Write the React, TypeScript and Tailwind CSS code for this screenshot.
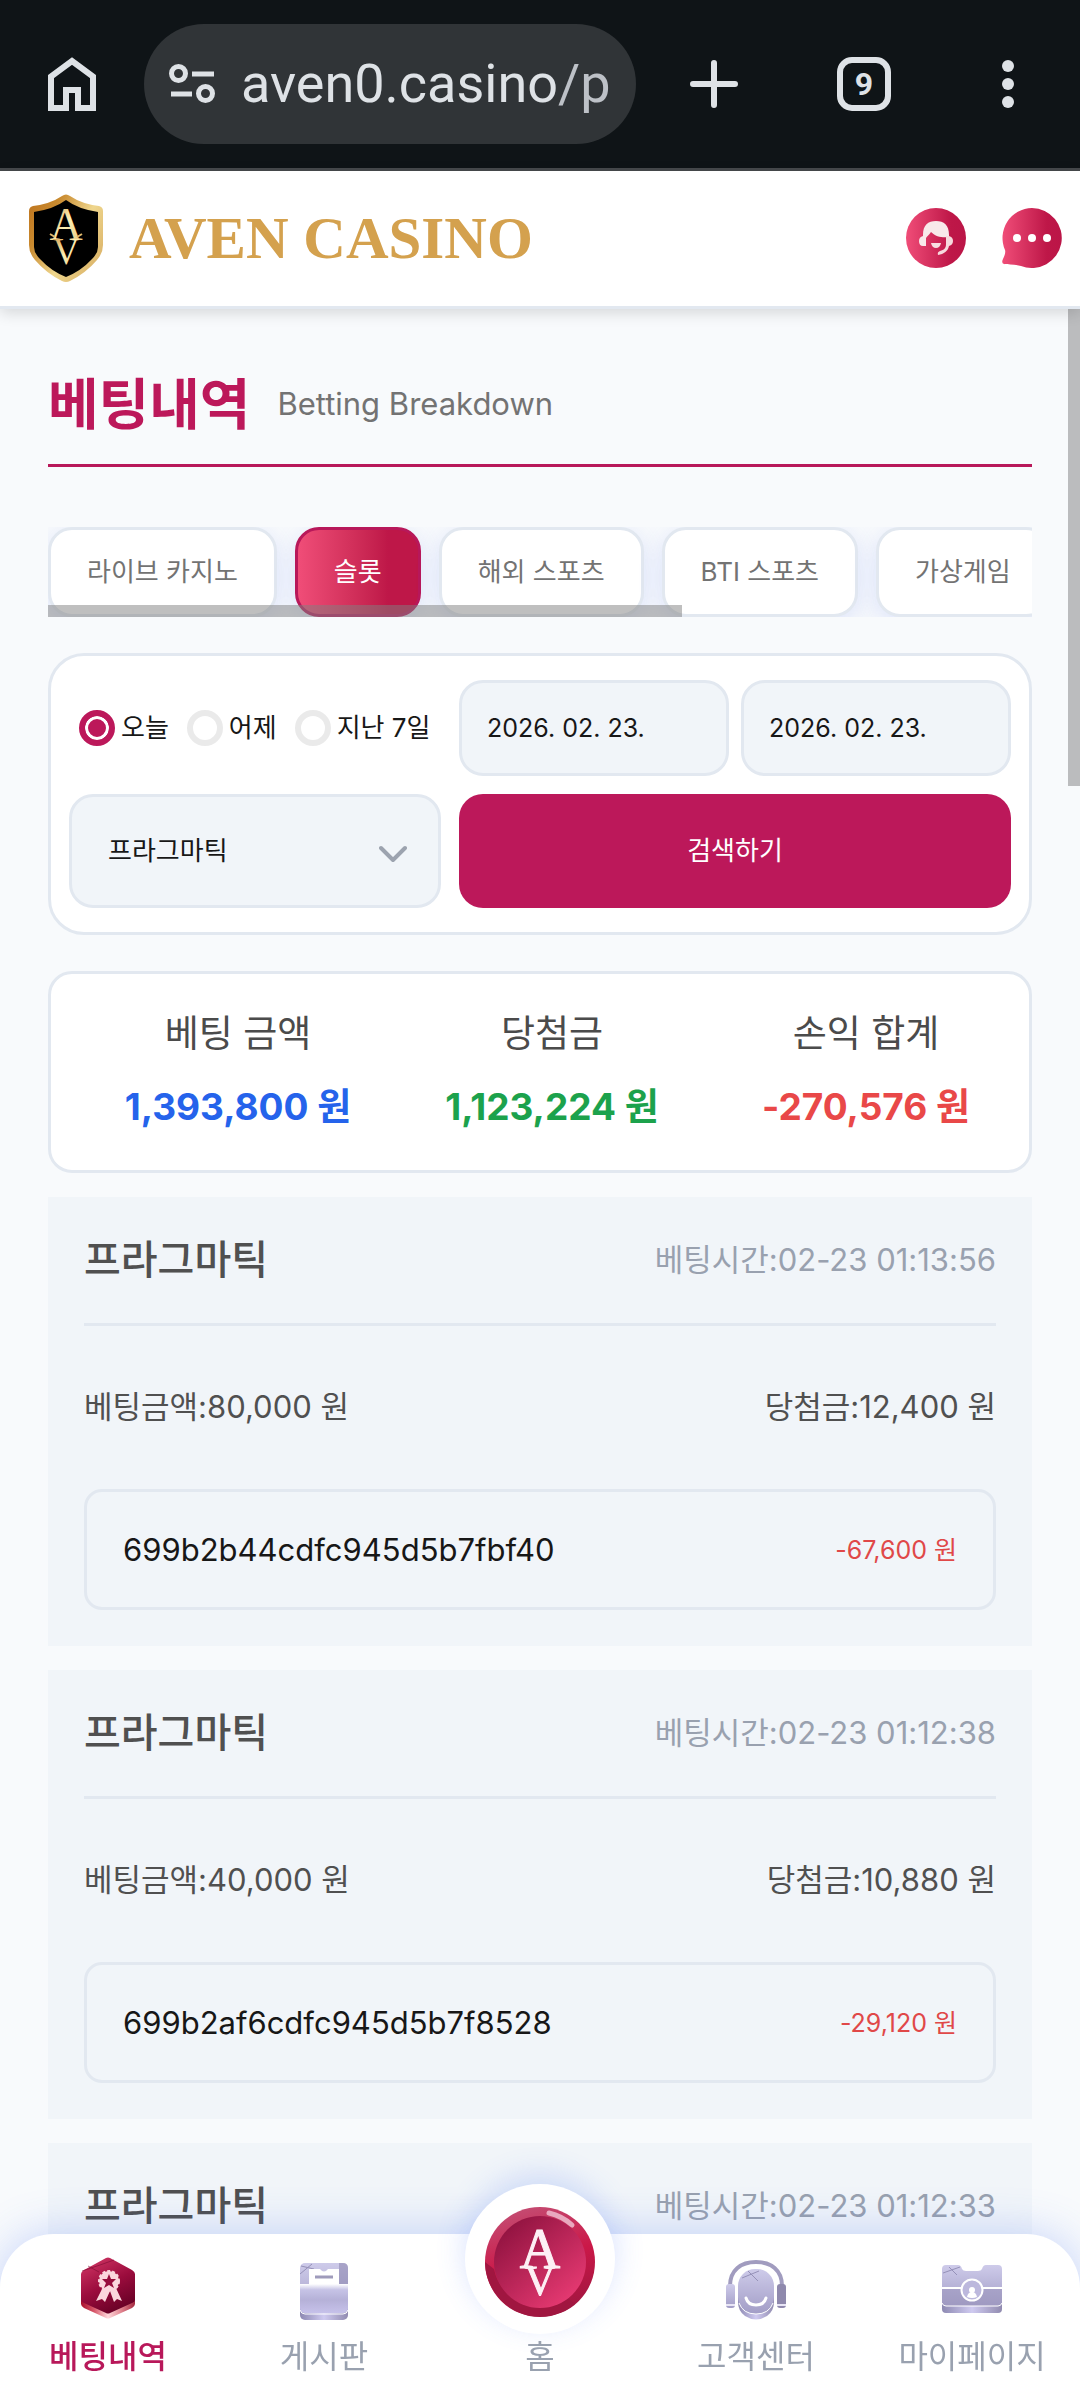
import { useState } from "react";
import type { ReactNode } from "react";

type BetRecord = {
  time: string;
  detail?: { bet: string; win: string; id: string; net: string };
};

const categories = ["라이브 카지노", "슬롯", "해외 스포츠", "BTI 스포츠", "가상게임"];
const periods = ["오늘", "어제", "지난 7일"];

const totals = [
  { label: "베팅 금액", value: "1,393,800 원", color: "text-[#2563eb]" },
  { label: "당첨금", value: "1,123,224 원", color: "text-[#1ca24c]" },
  { label: "손익 합계", value: "-270,576 원", color: "text-[#e94848]" },
];

const records: BetRecord[] = [
  { time: "02-23 01:13:56", detail: { bet: "80,000", win: "12,400", id: "699b2b44cdfc945d5b7fbf40", net: "-67,600" } },
  { time: "02-23 01:12:38", detail: { bet: "40,000", win: "10,880", id: "699b2af6cdfc945d5b7f8528", net: "-29,120" } },
  { time: "02-23 01:12:33" },
];

function BrowserBar() {
  return (
    <div className="flex h-[171px] shrink-0 items-center border-b-[3px] border-[#46494c] bg-[#0f1417] text-[#dee2e6]">
      <button aria-label="Home" className="flex w-36 shrink-0 justify-center">
        <svg width="48" height="54" viewBox="0 0 48 54" fill="none" stroke="currentColor" strokeWidth="6">
          <path d="M3 51V19.500L24 4L45 19.500V51H30V33H18V51Z" />
        </svg>
      </button>
      <div className="flex h-[120px] min-w-0 flex-1 items-center gap-[26px] rounded-full bg-[#303437] pl-[25px]">
        <svg className="shrink-0" width="46" height="40" viewBox="0 0 46 40" fill="none" stroke="currentColor" strokeWidth="5">
          <circle cx="9.500" cy="9.500" r="7" />
          <circle cx="36.500" cy="29.500" r="7" />
          <path d="M23 10H45M2 30H23" />
        </svg>
        <span className="font-[Roboto,sans-serif] text-[54px] leading-[72px] whitespace-nowrap">
          aven0.casino<span className="text-[#bdc1c7]">/p</span>
        </span>
      </div>
      <button aria-label="New tab" className="flex w-[156px] shrink-0 justify-center">
        <svg width="48" height="48" viewBox="0 0 48 48" stroke="currentColor" strokeWidth="6" strokeLinecap="round">
          <path d="M24 3V45M3 24H45" />
        </svg>
      </button>
      <button aria-label="Tabs" className="flex w-36 shrink-0 justify-center">
        <span className="flex size-[54px] items-center justify-center rounded-[15px] border-[6px] border-current font-[Roboto,sans-serif] text-[32px] leading-8 font-bold">
          9
        </span>
      </button>
      <button aria-label="Menu" className="flex w-36 shrink-0 justify-center">
        <svg width="12" height="48" viewBox="0 0 12 48" fill="currentColor">
          <circle cx="6" cy="6" r="6" />
          <circle cx="6" cy="24" r="6" />
          <circle cx="6" cy="42" r="6" />
        </svg>
      </button>
    </div>
  );
}

function Shield() {
  return (
    <svg width="74" height="90" viewBox="0 0 74 90">
      <defs>
        <linearGradient id="gold" x1="0" y1="0" x2="1" y2="0.7">
          <stop offset="0" stopColor="#bd721c" />
          <stop offset="0.3" stopColor="#c98a2f" />
          <stop offset="0.65" stopColor="#efd68d" />
          <stop offset="1" stopColor="#dcb56a" />
        </linearGradient>
        <linearGradient id="paleGold" x1="0" y1="0" x2="1" y2="1">
          <stop offset="0" stopColor="#c98a3a" />
          <stop offset="0.5" stopColor="#fdf0b4" />
          <stop offset="1" stopColor="#e2bd72" />
        </linearGradient>
      </defs>
      <path d="M33 3Q37 0 41 3Q53 11 70 13Q74 14 74 18V52Q74 60 68 67Q57 80 41 88Q37 90 33 88Q17 80 6 67Q0 60 0 52V18Q0 14 4 13Q21 11 33 3Z" fill="url(#gold)" />
      <path d="M37 7Q49 16 69 19V54Q69 60 63 66Q52 78 37 84Q22 78 11 66Q5 60 5 54V19Q25 16 37 7Z" fill="#000" />
      <g fill="url(#paleGold)" fontFamily="Liberation Serif, serif" textAnchor="middle">
        <text x="37" y="47" fontSize="46">A</text>
        <text x="37" y="71" fontSize="37">V</text>
      </g>
      <path d="M21 41L26 44M53 41L48 44" stroke="#dfb86b" strokeWidth="2" fill="none" />
    </svg>
  );
}

function SiteHeader() {
  return (
    <header className="relative z-10 flex h-[138px] shrink-0 items-center justify-between border-b-[3px] border-slate-200 bg-white pr-[18px] pb-[2px] pl-[29px] shadow-[0_4px_14px_rgba(0,0,0,0.14)]">
      <a href="#home" className="flex items-center gap-[26px]">
        <Shield />
        <span className="font-['Liberation_Serif',serif] text-[59px] leading-[64px] font-bold whitespace-nowrap text-[#d4a14e]">
          AVEN CASINO
        </span>
      </a>
      <div className="flex items-center gap-9">
        <button aria-label="Customer support">
          <svg width="60" height="60" viewBox="0 0 60 60">
            <defs>
              <linearGradient id="rose" x1="0" y1="0" x2="1" y2="0">
                <stop offset="0" stopColor="#f04d78" />
                <stop offset="0.75" stopColor="#be1748" />
                <stop offset="1" stopColor="#bb1547" />
              </linearGradient>
            </defs>
            <circle cx="30" cy="30" r="30" fill="url(#rose)" />
            <path d="M17 27C17 17 22 13 30 13C38 13 43 17 43 27V29C37 30 30 29 25 24C23 27 21 28 20 30V38H17Q13 38 13 33Q13 29 17 28Z" fill="#f8e9ea" />
            <path d="M40 28H43Q47 29 47 33Q47 37 43 38C42 43 38 46 32 47Q31 44 34 43C38 42 40 40 40 36Z" fill="#f6dadd" />
            <path d="M25 35H35Q34 40 30 40Q26 40 25 35Z" fill="#f8dfe2" />
          </svg>
        </button>
        <button aria-label="Chat">
          <svg width="60" height="60" viewBox="0 0 60 60">
            <path d="M30 0A30 30 0 1 1 19 58C13 56 6 57 2 56Q-1 55 1 51Q4 45 3 42A30 30 0 0 1 30 0Z" fill="url(#rose)" />
            <g fill="#fff">
              <circle cx="15" cy="30" r="4" />
              <circle cx="30" cy="30" r="4" />
              <circle cx="45" cy="30" r="4" />
            </g>
          </svg>
        </button>
      </div>
    </header>
  );
}

function CategoryTabs() {
  const [active, setActive] = useState("슬롯");
  return (
    <div className="relative mt-[60px] overflow-hidden">
      <div className="flex gap-[18px]">
        {categories.map((name) => (
          <button
            key={name}
            onClick={() => setActive(name)}
            className={
              "h-[90px] shrink-0 rounded-3xl border-[3px] px-9 text-[26px] leading-9 whitespace-nowrap shadow-[0_6px_24px_rgba(66,99,235,0.16)] " +
              (name === active
                ? "border-[#b8185a] bg-linear-to-r from-[#f04d78] to-[#be1748] to-75% text-white"
                : "border-slate-200 bg-white text-[#737373]")
            }
          >
            {name}
          </button>
        ))}
      </div>
      <div className="absolute bottom-0 left-0 h-3 w-[64.4%] bg-[#808080]/50" />
    </div>
  );
}

function FilterPanel() {
  const [period, setPeriod] = useState("오늘");
  return (
    <form
      onSubmit={(e) => e.preventDefault()}
      className="mt-9 grid grid-cols-[31fr_46fr] gap-[18px] rounded-[36px] border-[3px] border-slate-200 bg-white px-[18px] py-6 text-[26px] leading-9 text-[#171717]"
    >
      <div className="flex items-center gap-[18px] pl-[10px]">
        {periods.map((name) => (
          <label key={name} className="flex items-center gap-[6px] whitespace-nowrap">
            <input
              type="radio"
              name="period"
              checked={period === name}
              onChange={() => setPeriod(name)}
              className="size-9 shrink-0 appearance-none rounded-full border-[6px] border-[#eaeaea] bg-white checked:border-[#bc185a] checked:bg-[#bc185a] checked:shadow-[inset_0_0_0_3px_white]"
            />
            {name}
          </label>
        ))}
      </div>
      <div className="grid grid-cols-2 gap-3">
        {["시작일", "종료일"].map((name) => (
          <input
            key={name}
            aria-label={name}
            defaultValue="2026. 02. 23."
            className="h-24 w-full min-w-0 rounded-3xl border-[3px] border-slate-200 bg-slate-100 px-[25px] text-[25px]"
          />
        ))}
      </div>
      <div className="relative">
        <select
          aria-label="게임사"
          className="h-[114px] w-full appearance-none rounded-3xl border-[3px] border-slate-200 bg-slate-100 pl-9"
        >
          <option>프라그마틱</option>
        </select>
        <svg
          className="pointer-events-none absolute top-1/2 right-[34px] -mt-[6px]"
          width="28"
          height="18"
          viewBox="0 0 28 18"
          fill="none"
          stroke="#9ca3af"
          strokeWidth="4"
          strokeLinecap="round"
          strokeLinejoin="round"
        >
          <path d="M2 3L14 15L26 3" />
        </svg>
      </div>
      <button type="submit" className="h-[114px] rounded-3xl bg-[#bc185a] text-white">
        검색하기
      </button>
    </form>
  );
}

function Totals() {
  return (
    <dl className="mt-9 grid grid-cols-3 rounded-3xl border-[3px] border-slate-200 bg-white pt-8 pr-[6px] pb-9 pl-[30px] text-center">
      {totals.map((t) => (
        <div key={t.label} className="flex flex-col gap-[18px]">
          <dt className="text-[37px] leading-[56px] text-[#4b4b4b]">{t.label}</dt>
          <dd className={"text-[37px] leading-[54px] font-bold whitespace-nowrap " + t.color}>{t.value}</dd>
        </div>
      ))}
    </dl>
  );
}

function RecordCard({ time, detail }: BetRecord) {
  return (
    <article className="mt-6 min-h-[300px] bg-slate-100 p-9 text-[31px] leading-[54px] whitespace-nowrap text-[#505050]">
      <div className="flex h-[93px] items-start justify-between border-b-[3px] border-slate-200">
        <h2 className="text-[40px] font-medium">프라그마틱</h2>
        <span className="text-gray-400">베팅시간:{time}</span>
      </div>
      {detail && (
        <>
          <div className="flex justify-between pt-[54px] pb-[55px]">
            <span>베팅금액:{detail.bet} 원</span>
            <span>당첨금:{detail.win} 원</span>
          </div>
          <div className="flex h-[121px] items-center justify-between rounded-[18px] border-[3px] border-slate-200 px-9">
            <span className="text-[#171717]">{detail.id}</span>
            <span className="text-[25px] text-[#e04848]">{detail.net} 원</span>
          </div>
        </>
      )}
    </article>
  );
}

function BettingIcon() {
  return (
    <svg width="64" height="64" viewBox="0 0 64 64">
      <defs>
        <linearGradient id="hexFace" x1="0.2" y1="0" x2="0.7" y2="1">
          <stop offset="0" stopColor="#cf3463" />
          <stop offset="0.5" stopColor="#9b0c3d" />
          <stop offset="1" stopColor="#640024" />
        </linearGradient>
        <linearGradient id="hexEdge" x1="0" y1="0" x2="1" y2="0">
          <stop offset="0" stopColor="#a90e2c" />
          <stop offset="0.25" stopColor="#d85a6c" />
          <stop offset="0.5" stopColor="#ffd9dc" />
          <stop offset="0.75" stopColor="#e0828e" />
          <stop offset="1" stopColor="#a3283f" />
        </linearGradient>
      </defs>
      <path d="M5 42V48Q5 50 8 52L30 62Q32 63 34 62L56 52Q59 50 59 48V42Z" fill="url(#hexEdge)" />
      <path d="M30 2Q32 1 34 2L56 14Q59 16 59 18V44Q59 46 56 47L34 57Q32 58 30 57L8 47Q5 46 5 44V18Q5 16 8 14Z" fill="url(#hexFace)" />
      <path d="M6 15L24 9L38 4M12 10L23 16" stroke="#7d0b33" strokeWidth="1" fill="none" opacity="0.6" />
      <path d="M26 33L20 45L26 43L29 46L34 35L38 46L41 43L46 45L40 32Z" fill="#fbd7dd" />
      <circle cx="33" cy="25" r="10" fill="#fbd7dd" stroke="#fbd7dd" strokeWidth="2" strokeDasharray="3 2" />
      <path d="M33 18L35 23L40 23L36 27L38 32L33 29L28 32L30 27L26 23L31 23Z" fill="#970d3c" />
    </svg>
  );
}

function BoardIcon() {
  return (
    <svg width="64" height="64" viewBox="0 0 64 64">
      <defs>
        <linearGradient id="lilac" x1="0" y1="0" x2="0" y2="1">
          <stop offset="0" stopColor="#cecbea" />
          <stop offset="1" stopColor="#a29dc6" />
        </linearGradient>
        <linearGradient id="lilacShine" x1="0" y1="0" x2="1" y2="0">
          <stop offset="0" stopColor="#8d89b2" />
          <stop offset="0.5" stopColor="#cfcaf0" />
          <stop offset="1" stopColor="#918bb0" />
        </linearGradient>
        <linearGradient id="frontPanel" x1="0" y1="0" x2="0" y2="1">
          <stop offset="0" stopColor="#fff" />
          <stop offset="0.2" stopColor="#c6c3e6" />
          <stop offset="0.55" stopColor="#b5b1d8" />
          <stop offset="1" stopColor="#c6c1ea" />
        </linearGradient>
      </defs>
      <rect x="8" y="48" width="48" height="16" rx="5" fill="url(#lilacShine)" />
      <rect x="8" y="7" width="48" height="50" rx="5" fill="url(#lilac)" />
      <path d="M47 7H51Q56 7 56 12V29H47Z" fill="#8f8bb2" opacity="0.6" />
      <path d="M8 18L20 8M9 10L22 13" stroke="#9591b8" strokeWidth="1" />
      <path d="M17 13H28Q32 18 36 13H47V29H17Z" fill="#fff" />
      <path d="M23 21H41" stroke="#9f9bbb" strokeWidth="3" />
      <path d="M8 28H56V52Q56 57 51 57H13Q8 57 8 52Z" fill="url(#frontPanel)" />
      <path d="M8 54Q9 58 13 58H51Q55 58 56 54" stroke="#fff" strokeWidth="1" fill="none" />
    </svg>
  );
}

function SupportIcon() {
  return (
    <svg width="64" height="64" viewBox="0 0 64 64">
      <path d="M14 40H50V46Q50 55 43 60Q32 67 21 60Q14 55 14 46Z" fill="url(#lilacShine)" />
      <rect x="14" y="13" width="36" height="45" rx="17" fill="url(#lilac)" />
      <path d="M15 47Q19 58 32 58Q45 58 49 47" stroke="#fff" strokeWidth="1" fill="none" />
      <path d="M18 22L35 15M24 15L34 25" stroke="#9591b8" strokeWidth="1" />
      <path d="M6 30C6 14 17 6 32 6C47 6 58 14 58 30" stroke="#a19cbf" strokeWidth="4" fill="none" />
      <rect x="2" y="28" width="9" height="24" rx="3" fill="url(#lilac)" />
      <rect x="53" y="28" width="9" height="24" rx="3" fill="#8f89ad" />
      <path d="M2 49H11M53 49H62" stroke="#e9e6f6" strokeWidth="2" />
      <path d="M22 42Q24 49 32 49Q40 49 42 42" stroke="#fff" strokeWidth="3" strokeLinecap="round" fill="none" />
    </svg>
  );
}

function MyPageIcon() {
  return (
    <svg width="64" height="64" viewBox="0 0 64 64">
      <rect x="2" y="42" width="60" height="15" rx="4" fill="url(#lilacShine)" />
      <path d="M6 9H18Q21 9 22 13Q23 15 26 15H38Q41 15 42 13Q43 9 46 9H58Q62 9 62 13V46Q62 50 58 50H6Q2 50 2 46V13Q2 9 6 9Z" fill="url(#lilac)" />
      <path d="M2 33H62V46Q62 50 58 50H6Q2 50 2 46Z" fill="#9c97bd" opacity="0.55" />
      <path d="M2 32H62" stroke="#fff" strokeWidth="2" />
      <path d="M2 47Q3 50 6 50H58Q61 50 62 47" stroke="#fff" strokeWidth="1" fill="none" />
      <path d="M3 17L20 11M9 11L17 19" stroke="#9591b8" strokeWidth="1" />
      <circle cx="32" cy="34" r="10.500" fill="#bcb8dd" stroke="#fff" strokeWidth="2" />
      <circle cx="32" cy="34" r="3" fill="#fff" />
      <path d="M27 41Q28 36 32 36Q36 36 37 41Q32 43 27 41Z" fill="#fff" />
    </svg>
  );
}

function HomeCoin() {
  return (
    <svg width="110" height="110" viewBox="0 0 110 110">
      <defs>
        <linearGradient id="coinRim" x1="0.3" y1="0" x2="0.6" y2="1">
          <stop offset="0" stopColor="#c44d73" />
          <stop offset="0.5" stopColor="#cb1848" />
          <stop offset="1" stopColor="#a01640" />
        </linearGradient>
        <linearGradient id="coinFace" x1="0.1" y1="0.1" x2="0.8" y2="0.9">
          <stop offset="0" stopColor="#8f123f" />
          <stop offset="1" stopColor="#e33870" />
        </linearGradient>
      </defs>
      <circle cx="55" cy="55" r="55" fill="url(#coinRim)" />
      <path d="M0 55A55 55 0 0 0 90 97L82 90A46 46 0 0 1 9 62Z" fill="#a01640" />
      <circle cx="55" cy="55" r="46" fill="url(#coinFace)" />
      <path d="M64 6Q77 9 87 18" stroke="#e9a9bf" strokeWidth="5" strokeLinecap="round" fill="none" />
      <g fill="#fdf0f5" stroke="#fdf0f5" fontFamily="Liberation Serif, serif" textAnchor="middle">
        <text x="55" y="61" fontSize="56">A</text>
        <text x="55" y="88" fontSize="42">V</text>
      </g>
    </svg>
  );
}

function NavItem({ label, active, children }: { label: string; active?: boolean; children: ReactNode }) {
  return (
    <a
      href={"#" + label}
      className={
        "flex flex-col items-center gap-[13px] pt-[22px] text-[32px] leading-[48px] whitespace-nowrap " +
        (active ? "font-medium text-[#b8185a]" : "text-gray-400")
      }
    >
      <span className="flex h-16 items-end justify-center">{children}</span>
      <span className="relative">{label}</span>
    </a>
  );
}

function BottomNav() {
  return (
    <nav className="fixed inset-x-0 bottom-0 z-20 grid h-[168px] grid-cols-5 rounded-t-[54px] bg-white shadow-[0_0_45px_rgba(66,109,245,0.28)]">
      <NavItem label="베팅내역" active><BettingIcon /></NavItem>
      <NavItem label="게시판"><BoardIcon /></NavItem>
      <NavItem label="홈">
        <span className="-mb-3.5 flex size-[150px] shrink-0 items-center justify-center rounded-full bg-white pt-[6px] shadow-[0_-9px_30px_rgba(66,109,245,0.2)]">
          <HomeCoin />
        </span>
      </NavItem>
      <NavItem label="고객센터"><SupportIcon /></NavItem>
      <NavItem label="마이페이지"><MyPageIcon /></NavItem>
    </nav>
  );
}

export default function App() {
  return (
    <div className="flex h-screen flex-col overflow-hidden bg-[#f8fafc] font-[Inter,'Noto_Sans_CJK_KR',sans-serif]">
      <BrowserBar />
      <SiteHeader />
      <main className="relative min-h-0 flex-1 overflow-hidden px-12">
        <div className="flex items-center gap-[27px] border-b-[3px] border-[#b8185a] pt-[54px] pb-[19px]">
          <h1 className="text-[55px] leading-[82px] font-bold text-[#bc185a]">베팅내역</h1>
          <p className="text-[31px] leading-[48px] text-[#737373]">Betting Breakdown</p>
        </div>
        <CategoryTabs />
        <FilterPanel />
        <Totals />
        {records.map((record) => (
          <RecordCard key={record.time} {...record} />
        ))}
        <div className="absolute top-0 right-0 h-[477px] w-3 bg-[#bbbcbe]" />
      </main>
      <BottomNav />
    </div>
  );
}
